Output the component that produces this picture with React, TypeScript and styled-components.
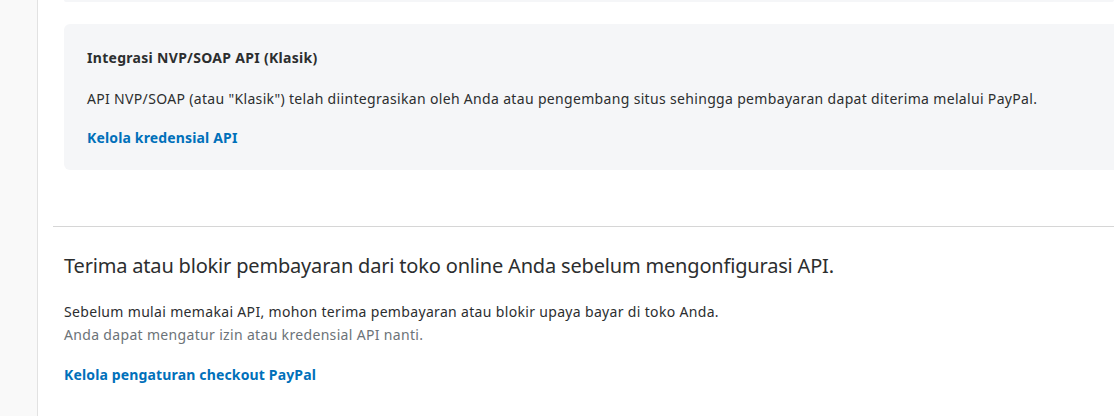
import React from "react";
import styled, { createGlobalStyle } from "styled-components";

const Global = createGlobalStyle`
  html, body { margin: 0; padding: 0; background: #ffffff; }
  body { font-family: "Noto Sans", "Open Sans", sans-serif; color: #2c2e2f; }
  * { box-sizing: border-box; }
`;

const Page = styled.div`
  display: flex;
  width: 1114px;
  height: 416px;
  overflow: hidden;
`;

const Sidebar = styled.aside`
  width: 38px;
  flex: none;
  background: #f9f9f9;
  border-right: 1px solid #e2e2e2;
`;

const Main = styled.main`
  flex: 1;
  min-width: 0;
  padding-left: 15px;
  display: flex;
  flex-direction: column;
`;

const Section = styled.section`
  padding-left: 11px;
`;

const CardEdge = styled.div`
  height: 2px;
  background: #f5f6f8;
  border-radius: 0 0 4px 4px;
`;

const Card = styled.div`
  margin-top: 22px;
  background: #f5f6f8;
  border-radius: 6px 0 0 6px;
  padding: 24px 23px 22px;
  display: flex;
  flex-direction: column;
`;

const CardTitle = styled.h3`
  margin: 0;
  font-size: 14px;
  line-height: 20px;
  font-weight: 700;
  letter-spacing: 0.3px;
  color: #2c2e2f;
`;

const Text = styled.p<{ $muted?: boolean }>`
  margin: 0;
  font-size: 14px;
  line-height: 23px;
  letter-spacing: 0.33px;
  color: ${(p) => (p.$muted ? "#6c7378" : "#2c2e2f")};
`;

const CardText = styled(Text)`
  margin-top: 21px;
  line-height: 20px;
`;

const Link = styled.a<{ $gap: number }>`
  display: block;
  margin-top: ${(p) => p.$gap}px;
  font-size: 14px;
  line-height: 20px;
  font-weight: 700;
  letter-spacing: 0.15px;
  color: #0070ba;
  text-decoration: none;
`;

const Divider = styled.hr`
  margin: 56px 0 0;
  border: none;
  border-top: 1px solid #d6d6d6;
  height: 0;
`;

const Heading = styled.h2`
  margin: 25px 0 20px;
  font-size: 20px;
  line-height: 28px;
  font-weight: 400;
  letter-spacing: -0.18px;
  color: #2c2e2f;
`;

export default function App() {
  return (
    <>
      <Global />
      <Page>
        <Sidebar />
        <Main>
          <Section>
            <CardEdge />
            <Card>
              <CardTitle>Integrasi NVP/SOAP API (Klasik)</CardTitle>
              <CardText>
                API NVP/SOAP (atau "Klasik") telah diintegrasikan oleh Anda atau pengembang situs sehingga pembayaran dapat diterima melalui PayPal.
              </CardText>
              <Link $gap={19} href="#">Kelola kredensial API</Link>
            </Card>
          </Section>
          <Divider />
          <Section>
            <Heading>Terima atau blokir pembayaran dari toko online Anda sebelum mengonfigurasi API.</Heading>
            <Text>Sebelum mulai memakai API, mohon terima pembayaran atau blokir upaya bayar di toko Anda.</Text>
            <Text $muted>Anda dapat mengatur izin atau kredensial API nanti.</Text>
            <Link $gap={19} href="#">Kelola pengaturan checkout PayPal</Link>
          </Section>
        </Main>
      </Page>
    </>
  );
}
